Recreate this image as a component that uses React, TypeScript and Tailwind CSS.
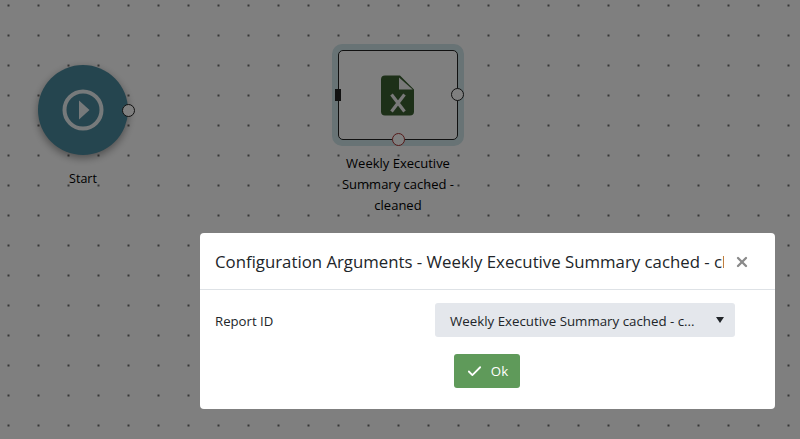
import { Check, X } from 'lucide-react'

function Port({ className }: { className: string }) {
  return <span className={`absolute h-[13px] w-[13px] rounded-full border-[1.5px] bg-white ${className}`} />
}

function StartNode() {
  return (
    <div className="absolute left-[38px] top-[65px] w-[90px]">
      <div className="relative flex h-[90px] w-[90px] items-center justify-center rounded-full bg-[#4a8a9e] shadow-[0_3px_8px_rgba(0,0,0,0.4)]">
        <svg width="42" height="42" viewBox="0 0 42 42" fill="none">
          <circle cx="21" cy="21" r="18.5" stroke="#fff" strokeOpacity="0.9" strokeWidth="4" />
          <path d="M17 11.5 L27.5 21 L17 30.5 Z" fill="#fff" fillOpacity="0.9" />
        </svg>
        <Port className="right-[-7px] top-[39px] border-[#222]" />
      </div>
      <p className="mt-[14px] text-center text-[12.5px] leading-[19px] text-black">Start</p>
    </div>
  )
}

function ExcelIcon() {
  return (
    <svg width="34" height="41" viewBox="0 0 34 41" className="mt-[1px]">
      <path
        d="M4 0.5 H19 L33 14.5 V36.5 a4 4 0 0 1 -4 4 H4 a4 4 0 0 1 -4 -4 V4.5 a4 4 0 0 1 4 -4 Z"
        fill="#3a6030"
      />
      <path d="M18 2.5 L31.7 14.5 H18 Z" fill="#f2f2f2" />
      <path d="M10.5 19.5 L23.5 36.5 M23.5 19.5 L10.5 36.5" stroke="#f2f2f2" strokeWidth="3.2" fill="none" />
    </svg>
  )
}

function ReportNode() {
  return (
    <div className="absolute left-[332px] top-[44px] w-[132px]">
      <div className="rounded-[10px] bg-[#d0e6ea] p-[6px]">
        <div className="relative flex h-[90px] items-center justify-center rounded-[5px] border-[1.5px] border-[#222] bg-white">
          <ExcelIcon />
          <span className="absolute left-[-4px] top-[38px] h-[12px] w-[6px] bg-[#222]" />
          <Port className="right-[-7px] top-[37px] border-[#222]" />
          <Port className="bottom-[-7px] left-[53px] border-[#a33]" />
        </div>
      </div>
      <p className="mt-[7px] text-center text-[13px] leading-[21px] text-black">
        Weekly Executive
        <br />
        Summary cached -
        <br />
        cleaned
      </p>
    </div>
  )
}

export default function App() {
  return (
    <div className="relative h-[439px] w-[800px] overflow-hidden bg-white bg-[radial-gradient(circle,#444_0.6px,transparent_1.1px)] bg-[size:30px_30px] bg-[position:-6.5px_-9.5px] font-['Open_Sans',sans-serif]">
      <StartNode />
      <ReportNode />
      <div className="absolute inset-0 bg-black/50" />

      <div className="absolute left-[200px] top-[233px] w-[575px] rounded-[4px] bg-white text-[#212529]">
        <div className="flex h-[57px] items-center border-b border-[#dee2e6] pl-[15px] pr-[25px]">
          <h5 className="flex-1 overflow-hidden whitespace-nowrap text-[16.8px] leading-[27px]">
            Configuration Arguments - Weekly Executive Summary cached - cleaned
          </h5>
          <X size={16} strokeWidth={3.5} className="ml-[10px] mt-[1px] text-[#8a8a8a]" />
        </div>
        <div className="px-[15px] pb-[21px] pt-[13px]">
          <div className="flex items-center justify-between pr-[25px]">
            <span className="mt-[3px] text-[13.2px]">Report ID</span>
            <div className="flex h-[34px] w-[300px] items-center justify-between rounded-[3px] bg-[#e4e7ec] pl-[15px] pr-[11px] text-[13.3px]">
              <span className="mt-[3px]">Weekly Executive Summary cached - c...</span>
              <span className="h-0 w-0 border-x-[4px] border-t-[6px] border-x-transparent border-t-[#212529]" />
            </div>
          </div>
          <div className="mt-[17px] flex pl-[239px]">
            <button
              type="button"
              className="flex h-[34px] w-[66px] items-center justify-center gap-[8px] rounded-[3px] bg-[#5f9a5a] text-[13.3px] text-white"
            >
              <Check size={17} strokeWidth={2.5} />
              <span className="mt-[1px]">Ok</span>
            </button>
          </div>
        </div>
      </div>
    </div>
  )
}
